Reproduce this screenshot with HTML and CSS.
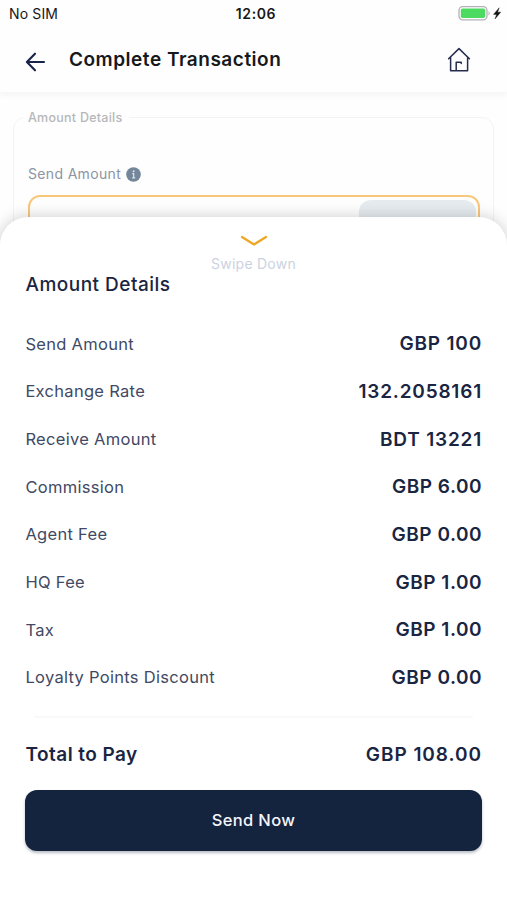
FILE: index.html
```html
<!DOCTYPE html>
<html lang="en">
<head>
<meta charset="utf-8">
<meta name="viewport" content="width=device-width, initial-scale=1">
<title>Complete Transaction</title>
<link rel="stylesheet" href="styles.css">
</head>
<body>
<div class="screen">
  <div class="status">
    <span class="carrier">No SIM</span>
    <span class="clock">12:06</span>
    <svg class="battery" width="45" height="16" viewBox="0 0 45 16">
      <rect x="1" y=".7" width="28" height="13.2" rx="3.8" fill="#fff" stroke="#b4b1b6" stroke-width="1.3"/>
      <rect x="2.8" y="2.5" width="24.4" height="9.6" rx="1.8" fill="#4cda60"/>
      <path d="M30.5 5.2c1.5.5 1.5 3.7 0 4.2z" fill="#b4b1b6"/>
      <path d="M41.2 1.8 35.5 8.4H38.6L37 13 42.7 6.2H39.6Z" fill="#111" stroke="#111" stroke-width=".4"/>
    </svg>
  </div>
  <header class="header">
    <svg class="back" width="22" height="22" viewBox="0 0 22 22" fill="none" stroke="#172349" stroke-width="2.1" stroke-linecap="round" stroke-linejoin="round"><path d="M19 11H2M10 2.7 1.9 11l8.1 8.3"/></svg>
    <h1 class="title">Complete Transaction</h1>
    <svg class="home" width="26" height="28" viewBox="0 0 26 28" fill="none" stroke="#252c4d" stroke-width="1.5" stroke-linejoin="round" stroke-linecap="round"><path d="M2.6 12.8 13 2.6l10.4 10.2M4.6 11.2V24.7H21.6V11.2M10.2 24.7V16.2H15.2V17.4"/></svg>
  </header>
  <main class="content">
    <fieldset class="details">
      <legend class="legend">Amount Details</legend>
      <div class="field-label"><span>Send Amount</span>
        <svg width="15" height="15" viewBox="0 0 15 15"><circle cx="7.5" cy="7.5" r="7.3" fill="#74869a"/><circle cx="7.6" cy="4.3" r="1" fill="#dde4ea"/><path d="M6.2 6.7h1.5v4.1M6.1 10.9h3.1" fill="none" stroke="#dde4ea" stroke-width="1.2"/></svg>
      </div>
      <div class="field"><div class="currency"></div></div>
    </fieldset>
  </main>
  <section class="sheet">
    <div class="handle">
      <svg width="30" height="12" viewBox="0 0 30 12" fill="none" stroke="#eea723" stroke-width="2.3" stroke-linecap="round" stroke-linejoin="round"><path d="M3 2 15 9.4 27 2"/></svg>
      <span>Swipe Down</span>
    </div>
    <h2 class="heading">Amount Details</h2>
    <dl class="rows">
      <div class="row"><dt>Send Amount</dt><dd>GBP 100</dd></div>
      <div class="row"><dt>Exchange Rate</dt><dd>132.2058161</dd></div>
      <div class="row"><dt>Receive Amount</dt><dd>BDT 13221</dd></div>
      <div class="row"><dt>Commission</dt><dd class="decimal">GBP 6.00</dd></div>
      <div class="row"><dt>Agent Fee</dt><dd class="decimal">GBP 0.00</dd></div>
      <div class="row"><dt>HQ Fee</dt><dd class="decimal">GBP 1.00</dd></div>
      <div class="row"><dt>Tax</dt><dd class="decimal">GBP 1.00</dd></div>
      <div class="row"><dt>Loyalty Points Discount</dt><dd class="decimal">GBP 0.00</dd></div>
    </dl>
    <div class="divider"></div>
    <div class="total"><span>Total to Pay</span><strong>GBP 108.00</strong></div>
    <button class="send" type="button">Send Now</button>
  </section>
</div>
</body>
</html>
```

FILE: styles.css
```css
* { box-sizing: border-box; }
body { margin: 0; background: #fff; font-family: Inter, "Liberation Sans", sans-serif; }
h1, h2, dl, dd { margin: 0; }
svg { display: block; flex: none; }
.screen { position: relative; width: 507px; height: 900px; overflow: hidden; background: #fefefe; }
.status { display: grid; grid-template-columns: 1fr auto 1fr; align-items: center; height: 28px; padding: 0 4px 0 9px; color: #18181a; font-size: 14px; line-height: 20px; }
.carrier { letter-spacing: .15px; }
.clock { font-weight: 600; letter-spacing: .6px; }
.battery { justify-self: end; margin-top: -1px; }
.header { display: flex; align-items: center; height: 65px; padding: 0 35px 0 25px; border-bottom: 1px solid #f8f8f8; box-shadow: 0 3px 5px rgba(0, 0, 0, .035); }
.back { margin-top: 3px; }
.title { flex: 1; margin: 0 0 0 22px; color: #17181b; font-size: 19px; font-weight: 600; line-height: 26px; letter-spacing: .52px; }
.content { padding: 16px 13px 0; }
.details { min-width: 0; height: 140px; margin: 0; padding: 37px 13px 0 14px; border: 1px solid #f3f3f4; border-radius: 12px; }
.legend { margin-left: -5px; padding: 1px 7px 0 5px; color: #b6b7ba; font-size: 12.5px; font-weight: 500; line-height: 16px; letter-spacing: .25px; }
.field-label { display: flex; align-items: center; gap: 5px; height: 20px; color: #8c95a3; font-size: 14px; letter-spacing: .34px; }
.field-label svg { margin-top: 2px; }
.field { display: flex; justify-content: flex-end; height: 60px; margin-top: 12px; padding: 3px 2px; border: 2px solid #f8c77c; border-radius: 12px; }
.currency { width: 117px; background: #e5ebef; border-radius: 12px; }
.sheet { position: absolute; inset: 217px 0 0; padding: 18px 25px 0; background: #fff; border-radius: 28px 28px 0 0; box-shadow: 0 0 16px rgba(0, 0, 0, .2); color: #1a2542; }
.handle { display: flex; flex-direction: column; align-items: center; gap: 8px; height: 37px; color: #cbd2e2; font-size: 14px; line-height: 18px; letter-spacing: .25px; }
.heading { height: 26px; padding-left: .5px; font-size: 19px; font-weight: 500; line-height: 26px; letter-spacing: .48px; }
.rows { margin-top: 22px; }
.row { display: flex; align-items: center; justify-content: space-between; height: 47.65px; }
.row dt { padding-left: .4px; color: #414964; font-size: 16.5px; letter-spacing: .3px; }
.row dd { font-size: 19px; font-weight: 600; letter-spacing: .8px; }
.row .decimal { letter-spacing: .5px; }
.divider { height: 2px; margin: 15px 9px 0; background: #f9f9f9; }
.total { display: flex; align-items: center; justify-content: space-between; height: 72px; font-size: 19px; }
.total span, .total strong { font-weight: 600; }
.total span { padding-left: .5px; letter-spacing: .45px; }
.total strong { letter-spacing: .95px; }
.send { display: block; width: 100%; height: 61px; padding: 0 0 1px; border: 0; border-radius: 12px; background: #14233e; box-shadow: 0 2px 3px rgba(20, 35, 62, .3); color: #f4f6fa; font: 500 16.5px/24px Inter, sans-serif; letter-spacing: .35px; }
```
